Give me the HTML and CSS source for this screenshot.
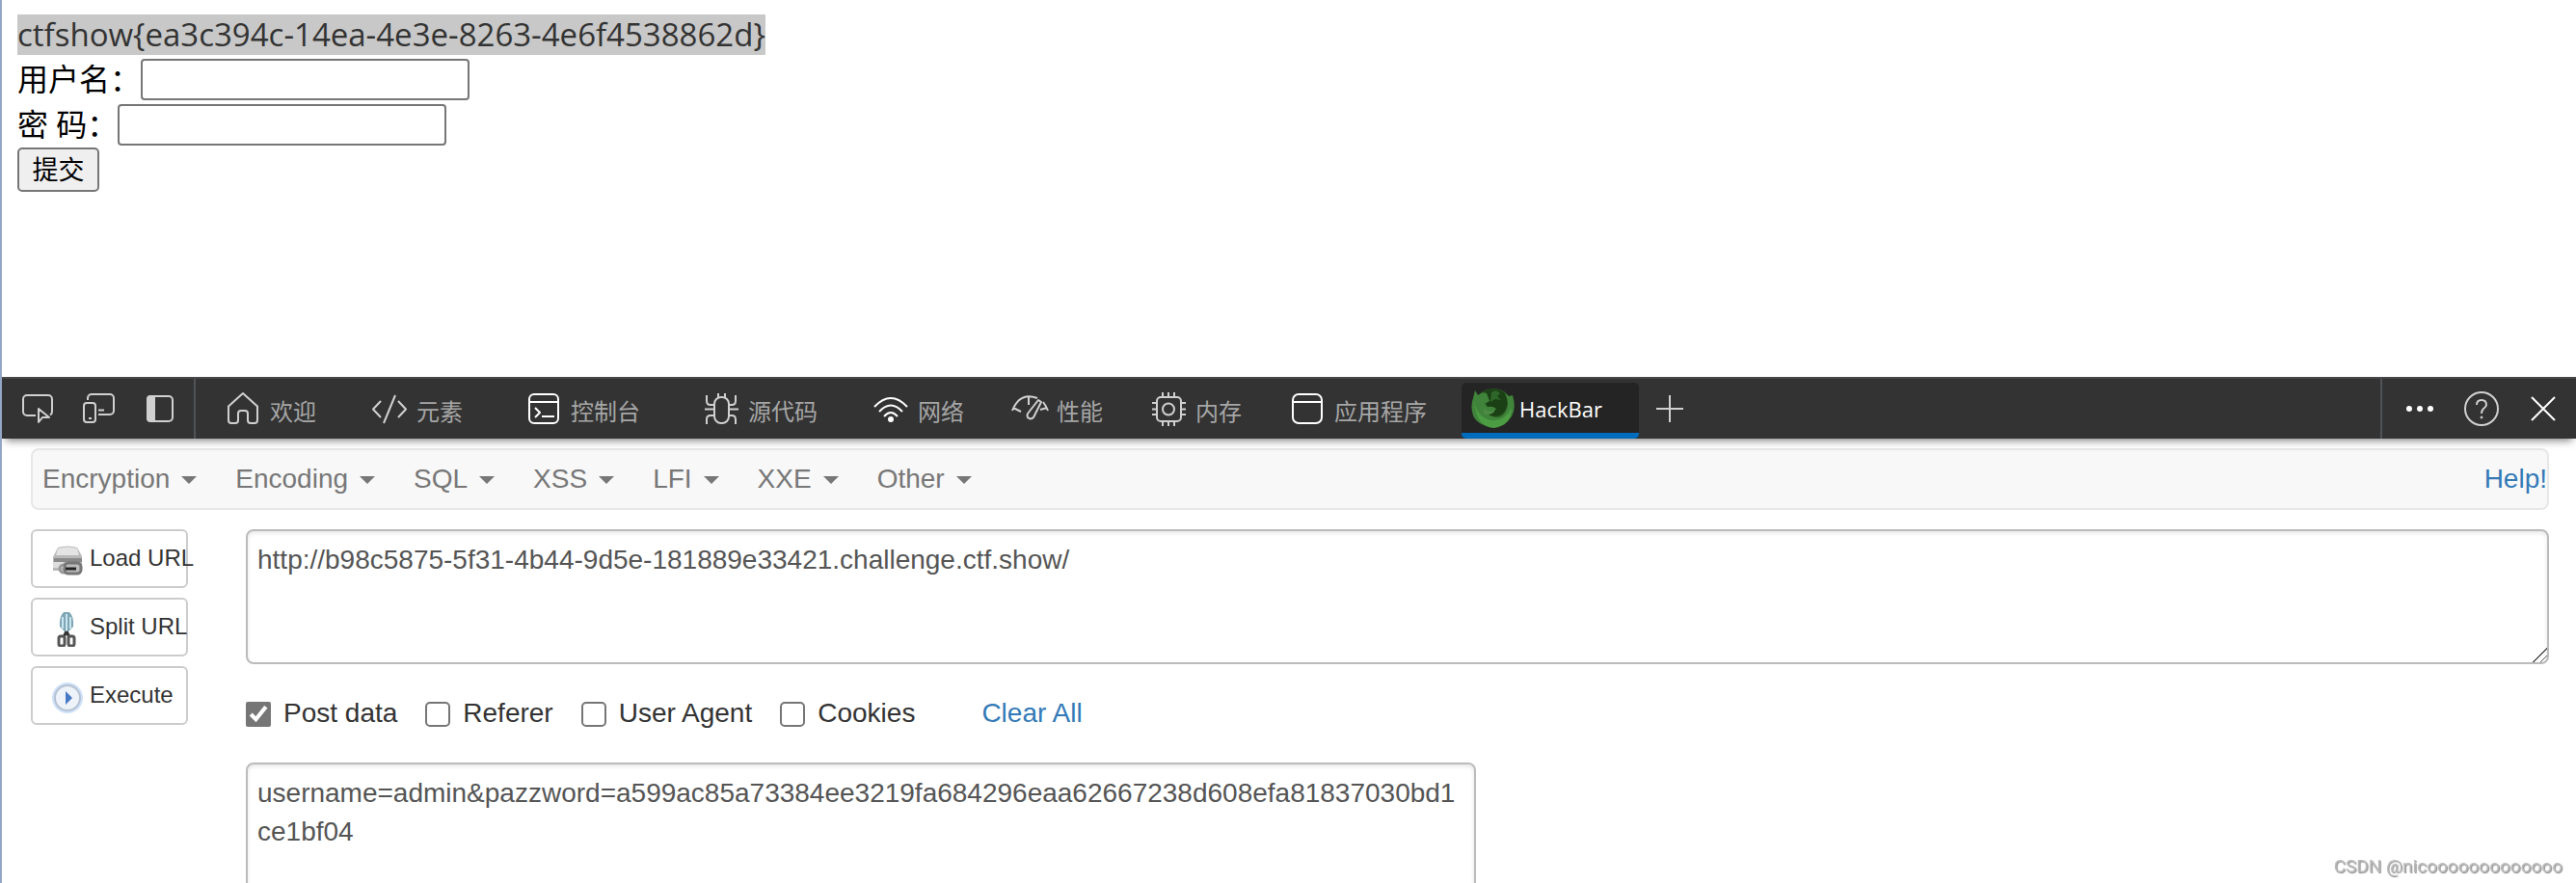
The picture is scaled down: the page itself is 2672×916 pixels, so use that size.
FILE: index.html
```html
<!DOCTYPE html>
<html lang="zh">

<head>
    <meta charset="UTF-8">
    <meta name="viewport" content="width=device-width, initial-scale=1.0">
    <title>ctfshow</title>
    <link rel="stylesheet" href="styles.css">
</head>

<body>
    <main class="login-page">
        <div class="flag"><span>ctfshow{ea3c394c-14ea-4e3e-8263-4e6f4538862d}</span></div>
        <form class="login-form">
            <div class="row">
                <label for="username">用户名：</label>
                <input type="text" id="username" name="username">
            </div>
            <div class="row">
                <label for="password">密 码：</label>
                <input type="password" id="password" name="password">
            </div>
            <button type="button">提交</button>
        </form>
    </main>

    <!-- devtools -->
    <section class="devtools">
        <header class="toolbar">
            <div class="tools">
                <button type="button" aria-label="Inspect">
                    <svg viewBox="0 0 36 36"><path d="M17 25H8a4 4 0 0 1-4-4V8a4 4 0 0 1 4-4h22a4 4 0 0 1 4 4v13a4 4 0 0 1-2 3.500M20 18v14l4-5h7z"/></svg>
                </button>
                <button type="button" aria-label="Device">
                    <svg viewBox="0 0 36 36"><path d="M7 9V7a4 4 0 0 1 4-4h19a4 4 0 0 1 4 4v13a4 4 0 0 1-4 4H18M18 19.500h6M8 28h3"/><rect x="3" y="12" width="12" height="20" rx="3"/></svg>
                </button>
                <button type="button" aria-label="Dock side">
                    <svg viewBox="0 0 36 36"><rect x="5" y="5" width="26" height="26" rx="4"/><path class="fill" d="M5 8q0-3 3-3h4v26H8q-3 0-3-3z"/></svg>
                </button>
            </div>
            <nav class="tabs">
                <button type="button" class="gap-small">
                    <svg viewBox="0 0 36 36"><path d="M3 15.500 18 2l15 13.500V30a3 3 0 0 1-3 3h-4a3 3 0 0 1-3-3v-7a3 3 0 0 0-3-3h-4a3 3 0 0 0-3 3v7a3 3 0 0 1-3 3H6a3 3 0 0 1-3-3z"/></svg>
                    <span>欢迎</span>
                </button>
                <button type="button" class="gap-large">
                    <svg viewBox="0 0 36 36"><path d="M9 10 1 18.500 9 27M27 10l8 8.500L27 27M24 4 12 33"/></svg>
                    <span>元素</span>
                </button>
                <button type="button" class="gap-large">
                    <svg class="bright" viewBox="0 0 36 36"><rect x="3" y="3" width="30" height="30" rx="5"/><path d="M3 11h30M9 17l5 5-5 5M16 26h13"/></svg>
                    <span>控制台</span>
                </button>
                <button type="button" class="gap-small">
                    <svg viewBox="0 0 36 36"><rect x="11" y="6" width="15" height="27" rx="7"/><path d="M15 2v4M22 2v4M3 4v6q0 4 4 4h4M33 4v6q0 4-4 4h-3M1 18.500h10M26 18.500h10M3 34v-5q0-4 4-4h4M33 34v-5q0-4-4-4h-3"/></svg>
                    <span>源代码</span>
                </button>
                <button type="button">
                    <svg class="bright" viewBox="0 0 36 36"><path d="M1 16Q18-2 35 16M6 21Q18 8 30 21M11 26q7-8 14 0"/><circle class="fill" cx="18" cy="29" r="2"/></svg>
                    <span>网络</span>
                </button>
                <button type="button">
                    <svg viewBox="0 0 36 36"><path d="M0 20Q8 0 26 7M32 11q3 4 5 9M1 17l8 4M17 6v8M29 19l7-2M27 9l3 2-8 16q-3 3-6 0-1-2 0-4z"/></svg>
                    <span>性能</span>
                </button>
                <button type="button">
                    <svg viewBox="0 0 36 36"><rect x="6" y="6" width="25" height="25" rx="4"/><circle cx="18" cy="18.500" r="6"/><path d="M12 1v5M18 1v5M24 1v5M12 31v5M18 31v5M24 31v5M1 12h5M1 18.500h5M1 24h5M31 12h5M31 18.500h5M31 24h5"/></svg>
                    <span>内存</span>
                </button>
                <button type="button">
                    <svg class="bright" viewBox="0 0 36 36"><rect x="3" y="3" width="30" height="30" rx="6"/><path d="M3 11h30"/></svg>
                    <span>应用程序</span>
                </button>
                <button type="button" class="active">
                    <svg class="fox" viewBox="0 0 44 44">
                        <circle cx="23" cy="22" r="20" fill="#2a5c24"/>
                        <path d="M12 6Q22-1 34 6q6 8 2 18-6 9-17 6z" fill="#1b4015"/>
                        <path d="M21 6q5-4 9 1l-3 3 4 4-6-1-5 3z" fill="#2f6629"/>
                        <path d="M4 4l3 5q5-4 9-2l2 5 1 3-5 3 3 3q6-1 9 2-3 4-8 3-2 3 4 5 9 3 13-4 6-9 0-20l4 3 4-1q4 13-1 22-7 11-19 11Q7 41 2 30-1 20 2 12z" fill="#3f843a"/>
                        <path d="M3 16q4 17 18 19 13 2 21-13 0 18-18 21Q6 43 3 16z" fill="#4b9c42"/>
                        <path d="M13 23q6 5 12 1-3 7-12 4z" fill="#4f8b46"/>
                    </svg>
                    <span>HackBar</span>
                </button>
                <button type="button" class="add" aria-label="More tools">
                    <svg viewBox="0 0 36 36"><path d="M18 4v28M4 18h28"/></svg>
                </button>
            </nav>
            <div class="tools tools-right">
                <button type="button" aria-label="Options">
                    <svg class="bright" viewBox="0 0 36 36"><g class="fill" stroke="none"><circle cx="7" cy="18" r="3"/><circle cx="18" cy="18" r="3"/><circle cx="29" cy="18" r="3"/></g></svg>
                </button>
                <button type="button" aria-label="Help">
                    <svg viewBox="0 0 36 36"><circle cx="18" cy="18" r="17"/><path d="M13 14q0-5 5-5t5 5q0 2-3 4-2 2-2 5"/><circle class="fill" cx="18" cy="27" r="1" stroke-width="1"/></svg>
                </button>
                <button type="button" aria-label="Close">
                    <svg class="bright" viewBox="0 0 36 36"><path d="M6 6l24 24M30 6 6 30"/></svg>
                </button>
            </div>
        </header>

        <div class="hackbar">
            <nav class="menu">
                <a href="#">Encryption</a>
                <a href="#">Encoding</a>
                <a href="#">SQL</a>
                <a href="#">XSS</a>
                <a href="#">LFI</a>
                <a href="#">XXE</a>
                <a href="#">Other</a>
                <a href="#" class="help">Help!</a>
            </nav>

            <div class="panel">
                <div class="actions">
                    <button type="button">
                        <svg viewBox="0 0 32 36">
                            <path d="M6 4q10-3 20 0l5 9v15H1V14z" fill="#b9b9b9"/>
                            <path d="M6 5q10-3 20 0l2 7H4z" fill="#e4e4e4"/>
                            <path d="M2 15h29v4H2z" fill="#8a8a8a"/>
                            <path d="M1 19h11v6H1z" fill="#dedede"/>
                            <rect x="8" y="22" width="16" height="8" rx="4" fill="none" stroke="#999" stroke-width="3"/>
                            <rect x="13" y="20" width="17" height="11" rx="4" fill="#bbb" stroke="#777" stroke-width="3"/>
                            <path d="M14 26h11" stroke="#222" stroke-width="3"/>
                        </svg>
                        <span>Load URL</span>
                    </button>
                    <button type="button">
                        <svg viewBox="0 0 32 36">
                            <path d="M12 0q-5 5-4 15l7 7V0zM18 0q5 5 4 15l-7 7V0z" fill="#7fa6b5"/>
                            <path d="M11 5v12M15 2v18M19 5v12" stroke="#c9e5ee" stroke-width="2"/>
                            <path d="M15 20l-3 6M15 20l3 6" stroke="#333" stroke-width="3"/>
                            <rect x="7" y="25" width="6" height="10" rx="2" fill="none" stroke="#555" stroke-width="3"/>
                            <rect x="17" y="25" width="6" height="10" rx="2" fill="none" stroke="#555" stroke-width="3"/>
                        </svg>
                        <span>Split URL</span>
                    </button>
                    <button type="button">
                        <svg viewBox="0 0 32 36">
                            <circle cx="16" cy="18" r="16" fill="#cfe2fa"/>
                            <circle cx="16" cy="18" r="13" fill="#eef3fa" stroke="#b6c2d2" stroke-width="2"/>
                            <path d="M14 11l7 7-7 7z" fill="#4779c4"/>
                        </svg>
                        <span>Execute</span>
                    </button>
                </div>

                <div class="request">
                    <textarea class="url" aria-label="URL">http://b98c5875-5f31-4b44-9d5e-181889e33421.challenge.ctf.show/</textarea>
                    <div class="options">
                        <label><input type="checkbox" checked>Post data</label>
                        <label><input type="checkbox">Referer</label>
                        <label><input type="checkbox">User Agent</label>
                        <label><input type="checkbox">Cookies</label>
                        <a href="#">Clear All</a>
                    </div>
                    <textarea class="post" aria-label="Post data">username=admin&amp;pazzword=a599ac85a73384ee3219fa684296eaa62667238d608efa81837030bd1ce1bf04</textarea>
                </div>
            </div>
        </div>
    </section>

    <div class="watermark">CSDN @nicooooooooooooo</div>
</body>

</html>
```

FILE: styles.css
```css
* {
    box-sizing: border-box;
}

body {
    display: flex;
    flex-direction: column;
    height: 100vh;
    margin: 0;
    overflow: hidden;
    border-left: 2px solid #93a7c5;
    background-color: #fff;
    color: #000;
    font-family: "Open Sans", "Noto Sans CJK SC", sans-serif;
}

button {
    font-family: inherit;
    cursor: pointer;
}

/* login page */
.login-page {
    flex: none;
    height: 391px;
    padding: 15px 16px;
    font-size: 32px;
    line-height: 42px;
}

.flag {
    margin-bottom: 2px;
    font-size: 33px;
}

.flag span {
    display: inline-block;
    background-color: #c8c8c8;
    color: #333;
}

.login-form .row {
    display: flex;
    align-items: center;
    height: 47px;
}

.login-form label {
    padding-bottom: 2px;
}

.login-form input {
    width: 341px;
    height: 43px;
    border: 2px solid #767676;
    border-radius: 4px;
}

.login-form button {
    display: block;
    width: 85px;
    height: 46px;
    padding: 0;
    border: 2px solid #767676;
    border-radius: 5px;
    background-color: #efefef;
    font-size: 27px;
    line-height: 40px;
}

/* devtools toolbar */
.devtools {
    display: flex;
    flex-direction: column;
    flex: 1;
    min-height: 0;
}

.toolbar {
    position: relative;
    display: flex;
    flex: none;
    height: 64px;
    border-top: 2px solid #474747;
    background-color: #333;
    box-shadow: 0 6px 8px -4px rgba(0, 0, 0, 0.5);
}

.toolbar button {
    display: flex;
    align-items: center;
    padding: 0;
    border: 0;
    background: none;
    color: #a6a6a6;
    font-size: 24px;
}

.toolbar svg {
    flex: none;
    width: 36px;
    height: 36px;
    overflow: visible;
    fill: none;
    stroke: #d0d0d0;
    stroke-width: 2;
    stroke-linejoin: round;
}

.toolbar svg.bright {
    stroke: #fff;
}

.toolbar .fill {
    fill: #d0d0d0;
}

.toolbar .bright .fill {
    fill: #fff;
}

.tools {
    display: flex;
    gap: 28px;
    padding: 0 17px 0 18px;
    border-right: 2px solid #4f5256;
}

.tools-right {
    padding: 0 16px 0 21px;
    border-right: 0;
    border-left: 2px solid #4f5256;
}

.tabs {
    display: flex;
    flex: 1;
    padding-left: 6px;
}

.tabs button {
    gap: 10px;
    padding: 0 25px;
}

.tabs span {
    padding-top: 2px;
}

.tabs .gap-small {
    margin-right: 8px;
}

.tabs .gap-large {
    margin-right: 16px;
}

.tabs .active {
    gap: 6px;
    width: 184px;
    margin: 4px 0 0 11px;
    padding: 0 10px;
    border-bottom: 6px solid #006cbe;
    border-radius: 5px;
    background-color: #242424;
    color: #fff;
    font-size: 22px;
}

.tabs .active .fox {
    width: 44px;
    height: 44px;
    stroke: none;
}

.tabs .add {
    padding: 0 14px;
}

/* hackbar */
.hackbar {
    flex: 1;
    min-height: 0;
    overflow: hidden;
    padding: 10px 28px 0 30px;
    color: #333;
    font-family: "Liberation Sans", Arial, sans-serif;
    font-size: 28px;
    line-height: 40px;
}

.hackbar a {
    color: #337ab7;
    text-decoration: none;
}

.menu {
    display: flex;
    align-items: center;
    gap: 40px;
    height: 64px;
    padding-left: 10px;
    border: 2px solid #e7e7e7;
    border-radius: 8px;
    background-color: #f8f8f8;
}

.menu a {
    display: flex;
    align-items: center;
}

.menu a:not(.help) {
    color: #777;
}

/* dropdown arrow */
.menu a:not(.help)::after {
    content: "";
    margin: 2px 0 0 12px;
    border-top: 8px solid #777;
    border-right: 8px solid transparent;
    border-left: 8px solid transparent;
}

.menu .help {
    margin-left: auto;
}

.panel {
    display: flex;
    gap: 60px;
    margin-top: 20px;
}

.actions {
    display: flex;
    flex-direction: column;
    flex: none;
    gap: 10px;
    width: 163px;
}

.actions button {
    display: flex;
    align-items: center;
    gap: 7px;
    height: 61px;
    padding: 0 0 0 20px;
    border: 2px solid #ccc;
    border-radius: 6px;
    background-color: #fff;
    color: #333;
    font-size: 24px;
    line-height: 34px;
    white-space: nowrap;
}

.actions span {
    padding-bottom: 2px;
}

.actions svg {
    flex: none;
    width: 32px;
    height: 36px;
    margin-top: 4px;
}

.request {
    flex: 1;
    min-width: 0;
}

.request textarea {
    display: block;
    width: 100%;
    height: 140px;
    padding: 10px;
    border: 2px solid #bbb;
    border-radius: 8px;
    box-shadow: inset 0 2px 4px rgba(0, 0, 0, 0.1);
    color: #555;
    font: inherit;
    word-break: break-all;
}

.request textarea::-webkit-resizer {
    background: linear-gradient(135deg, transparent 50%, #555 50%, #555 56%, transparent 56%, transparent 74%, #555 74%, #555 80%, transparent 80%);
}

.request .post {
    width: 1276px;
    max-width: 100%;
    height: 180px;
}

.options {
    display: flex;
    align-items: center;
    gap: 29px;
    height: 102px;
}

.options label {
    display: flex;
    align-items: center;
}

.options input {
    width: 26px;
    height: 26px;
    margin: 2px 13px 0 0;
    accent-color: #767676;
}

.options input:not(:checked) {
    appearance: none;
    border: 2px solid #767676;
    border-radius: 5px;
}

.options a {
    margin-left: 40px;
}

.watermark {
    position: fixed;
    right: 14px;
    bottom: 6px;
    color: #bbb;
    font-family: Roboto, sans-serif;
    font-size: 19px;
    text-shadow: 1px 1px 1px #888;
}
```
